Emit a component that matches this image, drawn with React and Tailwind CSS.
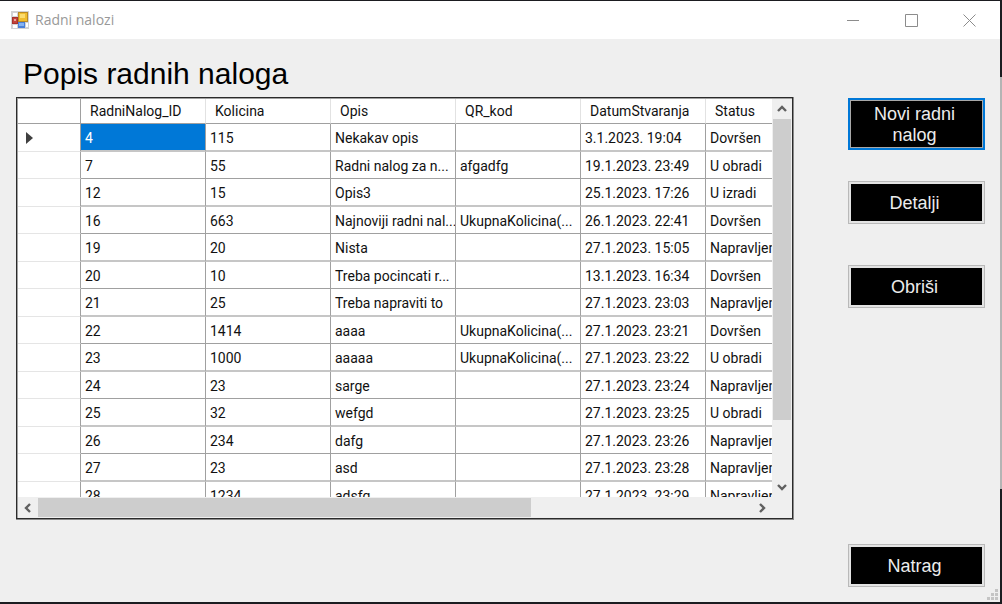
const columns = ["RadniNalog_ID", "Kolicina", "Opis", "QR_kod", "DatumStvaranja", "Status"];

const orders = [
  ["4", "115", "Nekakav opis", "", "3.1.2023. 19:04", "Dovršen"],
  ["7", "55", "Radni nalog za n...", "afgadfg", "19.1.2023. 23:49", "U obradi"],
  ["12", "15", "Opis3", "", "25.1.2023. 17:26", "U izradi"],
  ["16", "663", "Najnoviji radni nal...", "UkupnaKolicina(...", "26.1.2023. 22:41", "Dovršen"],
  ["19", "20", "Nista", "", "27.1.2023. 15:05", "Napravljen"],
  ["20", "10", "Treba pocincati r...", "", "13.1.2023. 16:34", "Dovršen"],
  ["21", "25", "Treba napraviti to", "", "27.1.2023. 23:03", "Napravljen"],
  ["22", "1414", "aaaa", "UkupnaKolicina(...", "27.1.2023. 23:21", "Dovršen"],
  ["23", "1000", "aaaaa", "UkupnaKolicina(...", "27.1.2023. 23:22", "U obradi"],
  ["24", "23", "sarge", "", "27.1.2023. 23:24", "Napravljen"],
  ["25", "32", "wefgd", "", "27.1.2023. 23:25", "U obradi"],
  ["26", "234", "dafg", "", "27.1.2023. 23:26", "Napravljen"],
  ["27", "23", "asd", "", "27.1.2023. 23:28", "Napravljen"],
  ["28", "1234", "adsfg", "", "27.1.2023. 23:29", "Napravljen"],
];

function AppIcon() {
  return (
    <svg width="18" height="18" viewBox="0 0 18 18" aria-hidden="true">
      <rect width="18" height="18" fill="#d2d2d4" />
      <rect x="2" y="2" width="4" height="3" fill="#fff" />
      <rect x="2" y="14" width="4" height="3" fill="#fff" />
      <rect x="15" y="12" width="2" height="4" fill="#fff" />
      <rect x="7" y="1" width="10" height="10" fill="#b98a24" />
      <rect x="8" y="2" width="8" height="8" fill="#f0bd2e" />
      <rect x="9" y="3" width="5" height="4" fill="#fbdc6e" />
      <rect x="1" y="6" width="6" height="7" fill="#a8302c" />
      <rect x="2" y="7" width="4" height="5" fill="#c4443c" />
      <rect x="3" y="8" width="2" height="2" fill="#eaa49c" />
      <rect x="7" y="11" width="7" height="6" fill="#4a80d8" />
      <rect x="8" y="12" width="5" height="3" fill="#86b4f2" />
    </svg>
  );
}

function CaptionButton({ label, path }) {
  return (
    <button type="button" aria-label={label} className="flex h-full w-[58px] items-center justify-center">
      <svg width="13" height="13" viewBox="0 0 13 13" fill="none" stroke="#8c8c8c" aria-hidden="true">
        <path d={path} />
      </svg>
    </button>
  );
}

function ArrowButton({ label, path }) {
  return (
    <button type="button" aria-label={label} className="flex size-5 shrink-0 items-center justify-center">
      <svg width="10" height="10" viewBox="0 0 10 10" fill="none" stroke="#606060" strokeWidth="2.4" aria-hidden="true">
        <path d={path} />
      </svg>
    </button>
  );
}

function ActionButton({ children, focused = false, className = "" }) {
  return (
    <button
      type="button"
      className={`flex w-full text-lg/[21px] text-[#ececec] ${
        focused ? "h-[52px] border-2 border-[#0078d7] bg-[#a8a8a8] p-px" : "h-[43px] border border-[#b9b9b9] bg-[#e3e3e3] p-0.5"
      } ${className}`}
    >
      <span className="flex h-full w-full items-center justify-center bg-black pt-0.5 pr-5 pl-4">{children}</span>
    </button>
  );
}

function OrdersTable() {
  return (
    <table className="w-[813px] table-fixed border-separate border-spacing-0 font-['Roboto',sans-serif] text-sm/5 text-[#111]">
      <colgroup>
        <col className="w-[63px]" />
        {columns.map((c) => (
          <col key={c} className="w-[125px]" />
        ))}
      </colgroup>
      <thead>
        <tr className="h-[25px]">
          <th aria-label="Redak" className="border-r border-b border-[#a0a0a0] p-0" />
          {columns.map((c) => (
            <th key={c} scope="col" className="border-r border-b border-r-[#e2e2e2] border-b-[#a0a0a0] py-0 pr-0 pl-[9px] text-left font-normal">
              {c}
            </th>
          ))}
        </tr>
      </thead>
      <tbody>
        {orders.map((row, r) => {
          const line = r % 2 === 0 ? "border-b-2 border-b-[#c6c6c6]" : "border-b border-b-[#a0a0a0]";
          return (
            <tr key={row[0]} className={r % 2 === 0 ? "h-7" : "h-[27px]"}>
              <th scope="row" aria-label={row[0]} className="border-r border-b border-r-[#a0a0a0] border-b-[#e5e5e5] py-0 pr-0 pl-2 text-left">
                {r === 0 && (
                  <svg width="7" height="12" viewBox="0 0 7 12" aria-hidden="true">
                    <path d="M0 0L7 6L0 12Z" fill="#404040" />
                  </svg>
                )}
              </th>
              {row.map((value, c) => (
                <td
                  key={c}
                  className={`overflow-hidden border-r border-r-[#a0a0a0] pt-0.5 pr-0 pb-0 pl-1 whitespace-nowrap ${line} ${
                    r === 0 && c === 0 ? "bg-[#0078d7] text-white" : ""
                  }`}
                >
                  {value}
                </td>
              ))}
            </tr>
          );
        })}
      </tbody>
    </table>
  );
}

export default function App() {
  return (
    <div className="flex h-screen bg-[#1b1c20] pt-px pb-0.5 font-['Liberation_Sans',Arial,sans-serif]">
      <div className="relative flex min-w-0 flex-1 flex-col bg-[#efefef]">
        <header className="flex h-[38px] shrink-0 items-center bg-white pr-0.5 pl-[11px]">
          <AppIcon />
          <span className="ml-1.5 flex-1 font-['Open_Sans',sans-serif] text-sm text-[#999]">Radni nalozi</span>
          <CaptionButton label="Minimiziraj" path="M0 6.5H12" />
          <CaptionButton label="Maksimiziraj" path="M0.5 0.5H12.5V12.5H0.5Z" />
          <CaptionButton label="Zatvori" path="M0.5 0.5L12.5 12.5M12.5 0.5L0.5 12.5" />
        </header>

        <main className="flex min-h-0 flex-1 gap-[54px] pr-[15px] pl-4">
          <section className="flex min-w-0 flex-1 flex-col pb-[82px]">
            <h1 className="flex h-[58px] shrink-0 items-end pb-1.5 pl-[7px] text-3xl/[34px] text-black">Popis radnih naloga</h1>
            <div className="flex min-h-0 flex-1 flex-col border-r border-b border-[#8a8a8a]">
              <div className="flex min-h-0 flex-1 flex-col border border-[#2b2b2b]">
                <div className="flex min-h-0 flex-1 flex-col border-t border-l border-[#a0a0a0] bg-[#efefef]">
                  <div className="flex min-h-0 flex-1">
                    <div className="min-w-0 flex-1 overflow-hidden bg-white">
                      <OrdersTable />
                    </div>
                    <div className="flex w-5 shrink-0 flex-col">
                      <ArrowButton label="Gore" path="M1 7L5 3L9 7" />
                      <div className="min-h-0 flex-1 px-px">
                        <div className="h-[84%] bg-[#cdcdcd]" />
                      </div>
                      <ArrowButton label="Dolje" path="M1 3L5 7L9 3" />
                    </div>
                  </div>
                  <div className="flex h-[21px] shrink-0 items-center pr-5">
                    <ArrowButton label="Lijevo" path="M7 1L3 5L7 9" />
                    <div className="h-full min-w-0 flex-1 py-px">
                      <div className="h-full w-[69%] bg-[#cdcdcd]" />
                    </div>
                    <ArrowButton label="Desno" path="M3 1L7 5L3 9" />
                  </div>
                </div>
              </div>
            </div>
          </section>

          <nav aria-label="Radnje" className="flex w-[137px] shrink-0 flex-col pt-[59px] pb-[15px]">
            <ActionButton focused>Novi radni nalog</ActionButton>
            <ActionButton className="mt-[31px]">Detalji</ActionButton>
            <ActionButton className="mt-[41px]">Obriši</ActionButton>
            <ActionButton className="mt-auto">Natrag</ActionButton>
          </nav>
        </main>

        <svg className="absolute right-0.5 bottom-0.5" width="11" height="11" viewBox="0 0 11 11" fill="#c4c4c4" aria-hidden="true">
          <path d="M8 0h3v3H8zM4 4h3v3H4zM8 4h3v3H8zM0 8h3v3H0zM4 8h3v3H4zM8 8h3v3H8z" />
        </svg>
      </div>
      <div className="flex w-0.5 shrink-0 flex-col">
        <div className="h-[76px]" />
        <div className="h-[412px] bg-[#b4b4b4]" />
      </div>
    </div>
  );
}
